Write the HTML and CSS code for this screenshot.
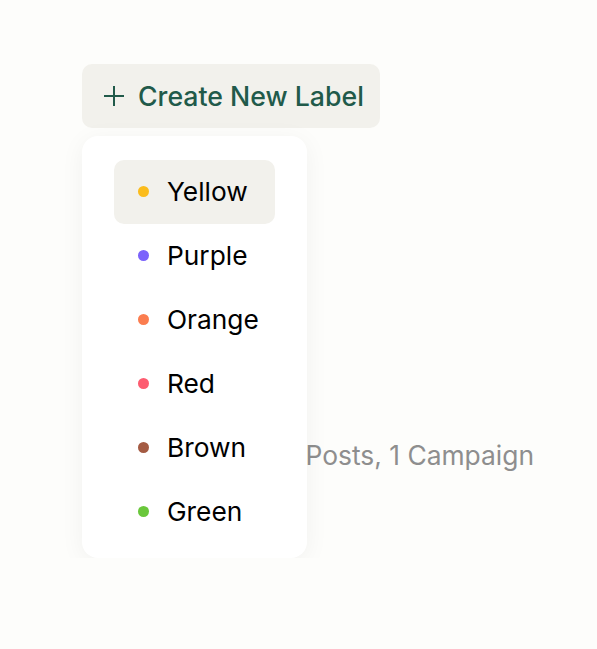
FILE: index.html
```html
<!DOCTYPE html>
<html>
<head>
<meta charset="utf-8">
<link rel="stylesheet" href="styles.css">
</head>
<body>
<div class="page">
  <button class="create-btn">
    <svg class="plus" width="22" height="22" viewBox="0 0 22 22"><path d="M11 1v20M1 11h20" stroke="currentColor" stroke-width="2" fill="none"/></svg>
    <span>Create New Label</span>
  </button>
  <div class="stage">
    <div class="meta">12 Posts, 1 Campaign</div>
    <ul class="menu">
      <li class="item active"><span class="dot yellow"></span>Yellow</li>
      <li class="item"><span class="dot purple"></span>Purple</li>
      <li class="item"><span class="dot orange"></span>Orange</li>
      <li class="item"><span class="dot red"></span>Red</li>
      <li class="item"><span class="dot brown"></span>Brown</li>
      <li class="item"><span class="dot green"></span>Green</li>
    </ul>
  </div>
</div>
</body>
</html>
```
FILE: styles.css
```css
html, body {
  margin: 0;
  padding: 0;
  background: #fdfdfb;
  font-family: Inter, "Noto Sans", sans-serif;
}
.page {
  padding: 64px 0 0 82px;
}
.create-btn {
  display: inline-flex;
  align-items: center;
  gap: 13px;
  height: 64px;
  padding: 0 16px 0 21px;
  border: none;
  border-radius: 10px;
  background: #f2f1ec;
  color: #215a4a;
  font-family: inherit;
  font-size: 26.7px;
  font-weight: 500;
}
.plus { display: block; }
.stage {
  position: relative;
  margin-top: 8px;
}
.meta {
  position: absolute;
  right: 63px;
  top: 303px;
  font-size: 26.4px;
  color: #8e8e8e;
  white-space: nowrap;
}
.menu {
  position: relative;
  list-style: none;
  margin: 0;
  width: 161px;
  padding: 24px 32px 14px;
  background: #fff;
  border-radius: 16px;
  box-shadow: 0 4px 24px rgba(0,0,0,0.05);
}
.item {
  display: flex;
  align-items: center;
  gap: 18px;
  height: 64px;
  padding-left: 24px;
  padding-bottom: 1px;
  box-sizing: border-box;
  border-radius: 10px;
  font-size: 26.3px;
  color: #000;
}
.item.active { background: #f2f1ec; }
.dot {
  width: 11px;
  height: 11px;
  border-radius: 50%;
  flex: none;
}
.yellow { background: #fbbc1c; }
.purple { background: #7b63fb; }
.orange { background: #fb7d4f; }
.red { background: #fd5c70; }
.brown { background: #a45b43; }
.green { background: #6ac73b; }
```
